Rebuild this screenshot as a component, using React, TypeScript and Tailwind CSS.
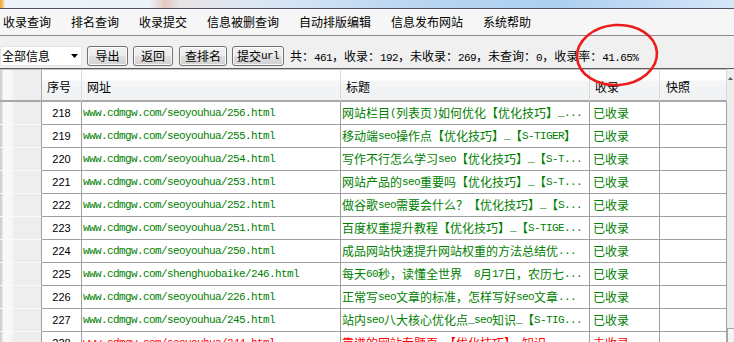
import React from "react";

type Row = { n: string; url: string; title: string; st: string; red?: boolean };

const rows: Row[] = [
  { n: "218", url: "www.cdmgw.com/seoyouhua/256.html", title: "网站栏目(列表页)如何优化【优化技巧】_...", st: "已收录" },
  { n: "219", url: "www.cdmgw.com/seoyouhua/255.html", title: "移动端seo操作点【优化技巧】_【S-TIGER】", st: "已收录" },
  { n: "220", url: "www.cdmgw.com/seoyouhua/254.html", title: "写作不行怎么学习seo【优化技巧】_【S-T...", st: "已收录" },
  { n: "221", url: "www.cdmgw.com/seoyouhua/253.html", title: "网站产品的seo重要吗【优化技巧】_【S-T...", st: "已收录" },
  { n: "222", url: "www.cdmgw.com/seoyouhua/252.html", title: "做谷歌seo需要会什么？【优化技巧】_【S...", st: "已收录" },
  { n: "223", url: "www.cdmgw.com/seoyouhua/251.html", title: "百度权重提升教程【优化技巧】_【S-TIGE...", st: "已收录" },
  { n: "224", url: "www.cdmgw.com/seoyouhua/250.html", title: "成品网站快速提升网站权重的方法总结优...", st: "已收录" },
  { n: "225", url: "www.cdmgw.com/shenghuobaike/246.html", title: "每天60秒，读懂全世界　8月17日，农历七...", st: "已收录" },
  { n: "226", url: "www.cdmgw.com/seoyouhua/226.html", title: "正常写seo文章的标准，怎样写好seo文章...", st: "已收录" },
  { n: "227", url: "www.cdmgw.com/seoyouhua/245.html", title: "站内seo八大核心优化点_seo知识_【S-TIG...", st: "已收录" },
  { n: "228", url: "www.cdmgw.com/seoyouhua/244.html", title: "靠谱的网站专题页_【优化技巧】_知识...", st: "未收录", red: true },
];

function Mixed({ text }: { text: string }) {
  const parts = text.split(/([\x20-\x7e]+)/).filter((p) => p.length > 0);
  return (
    <>
      {parts.map((p, i) =>
        /^[\x20-\x7e]+$/.test(p) ? (
          <span key={i} className="font-['Liberation_Mono',monospace] text-[11px] tracking-[-0.6px]">
            {p}
          </span>
        ) : (
          <span key={i}>{p}</span>
        )
      )}
    </>
  );
}

const menu = ["收录查询", "排名查询", "收录提交", "信息被删查询", "自动排版编辑", "信息发布网站", "系统帮助"];

function Btn({ w, children }: { w: string; children: React.ReactNode }) {
  return (
    <div
      className={`${w} flex h-[20px] items-center justify-center rounded-[3px] border border-[#707070] bg-[linear-gradient(180deg,#f3f3f3_0%,#ebebeb_48%,#dedede_52%,#d2d2d2_100%)] text-[12px] leading-none text-black shadow-[inset_0_0_0_1px_#fbfbfb]`}
    >
      {children}
    </div>
  );
}

const gutterBg =
  "bg-[linear-gradient(90deg,#cfcfcf_0px,#d6d6d6_2px,#f8f8f8_3px,#f8f8f8_11px,#eeeeee_14px,#eeeeee_100%)]";

export default function App() {
  return (
    <div className="relative h-[342px] w-[734px] overflow-hidden bg-[#f0f0f0] font-['Noto_Sans_CJK_SC',sans-serif] text-black">
      {/* title strip */}
      <div className="h-[9px] border-b border-[#4d5563] bg-[linear-gradient(90deg,#f2a33a_0px,#f4c877_3px,#eef3f9_5px,#edf2f8_150px,#e4c9c2_165px,#e9e2e4_180px,#dbe8f5_260px,#b8d5f1_420px,#add0f1_560px,#c4dcf5_660px,#d6e7f8_734px)]" />
      {/* menu */}
      <div className="flex h-[27px] items-center gap-5 border-b border-[#8a8a8a] bg-[#f6f6f6] pl-[3px] text-[12px]">
        {menu.map((m) => (
          <span key={m}>{m}</span>
        ))}
      </div>
      {/* toolbar */}
      <div className="flex h-[33px] items-start border-b border-[#5e5e5e] bg-[#f0f0f0] pt-[10px]">
        <div className="flex h-[20px] w-[82px] items-center justify-between border border-[#e4e4e4] bg-white pl-[1px] pr-[2px] text-[12px]">
          <span>全部信息</span>
          <svg width="8" height="4" viewBox="0 0 8 4">
            <path d="M0 0h7L3.5 4z" fill="#000" />
          </svg>
        </div>
        <div className="ml-[5px]">
          <Btn w="w-[41px]">导出</Btn>
        </div>
        <div className="ml-[5px]">
          <Btn w="w-[40px]">返回</Btn>
        </div>
        <div className="ml-[6px]">
          <Btn w="w-[48px]">查排名</Btn>
        </div>
        <div className="ml-[5px]">
          <Btn w="w-[52px]">
            <Mixed text="提交url" />
          </Btn>
        </div>
        <div className="ml-[6px] whitespace-pre text-[12px] leading-[20px]">
          <Mixed text="共：461，收录：192，未收录：269，未查询：0，收录率：41.65%" />
        </div>
      </div>
      {/* grid */}
      <div className="flex">
        <div className="w-[727px] bg-white">
          {/* header */}
          <div className="flex h-[33px] border-t border-[#c4c4c4] text-[12px]">
            <div className={`w-[42px] border-b-2 border-r border-[#a8a8a8] ${gutterBg}`} />
            {[
              { t: "序号", w: "w-[40px]", pl: "pl-[5px]" },
              { t: "网址", w: "w-[259px]", pl: "pl-[5px]" },
              { t: "标题", w: "w-[249px]", pl: "pl-[5px]" },
              { t: "收录", w: "w-[70px]", pl: "pl-[5px]" },
              { t: "快照", w: "w-[67px]", pl: "pl-[6px]" },
            ].map((h) => (
              <div
                key={h.t}
                className={`${h.w} ${h.pl} flex items-center border-b-2 border-r border-b-[#a8a8a8] border-r-[#dadada] bg-[linear-gradient(180deg,#ffffff_0%,#ffffff_34%,#f5f6f7_36%,#f0f1f3_100%)] pt-[3px]`}
              >
                {h.t}
              </div>
            ))}
          </div>
          {rows.map((r) => {
            const c = r.red ? "text-[#ff0000]" : "text-[#008000]";
            return (
              <div key={r.n} className="flex h-[23px] text-[12px]">
                <div className={`w-[42px] border-b border-r border-b-[#fafafa] border-r-[#a0a0a0] ${gutterBg}`} />
                <div className="flex w-[40px] items-center justify-center border-b border-r border-[#a0a0a0] font-['Liberation_Sans',sans-serif] text-[11px] text-black">
                  {r.n}
                </div>
                <div className={`flex w-[259px] items-center overflow-hidden whitespace-pre border-b border-r border-[#a0a0a0] pl-[1px] ${c}`}>
                  <span className="font-['Liberation_Mono',monospace] text-[11px] tracking-[-0.6px]">{r.url}</span>
                </div>
                <div className={`flex w-[249px] items-center overflow-hidden whitespace-pre border-b border-r border-[#a0a0a0] pl-[1px] ${c}`}>
                  <Mixed text={r.title} />
                </div>
                <div className={`flex w-[70px] items-center border-b border-r border-[#a0a0a0] pl-[3px] ${c}`}>{r.st}</div>
                <div className="w-[67px] border-b border-r border-[#a0a0a0]" />
              </div>
            );
          })}
        </div>
        {/* scrollbar */}
        <div className="flex h-[273px] w-[7px] flex-col justify-between bg-[#ededed]">
          <div className="mt-[8px] flex justify-center">
            <svg width="5" height="3" viewBox="0 0 5 3">
              <path d="M0 3L2.5 0L5 3z" fill="#606060" />
            </svg>
          </div>
          <div className="h-[14px] border-l border-t border-[#a8a8a8] bg-[#f4f4f4]" />
        </div>
      </div>
      {/* red annotation circle */}
      <svg className="pointer-events-none absolute left-0 top-0" width="734" height="342" viewBox="0 0 734 342">
        <ellipse cx="617" cy="55" rx="40" ry="30" fill="none" stroke="#ec1c1c" strokeWidth="2.6" transform="rotate(-4 617 55)" />
      </svg>
    </div>
  );
}
